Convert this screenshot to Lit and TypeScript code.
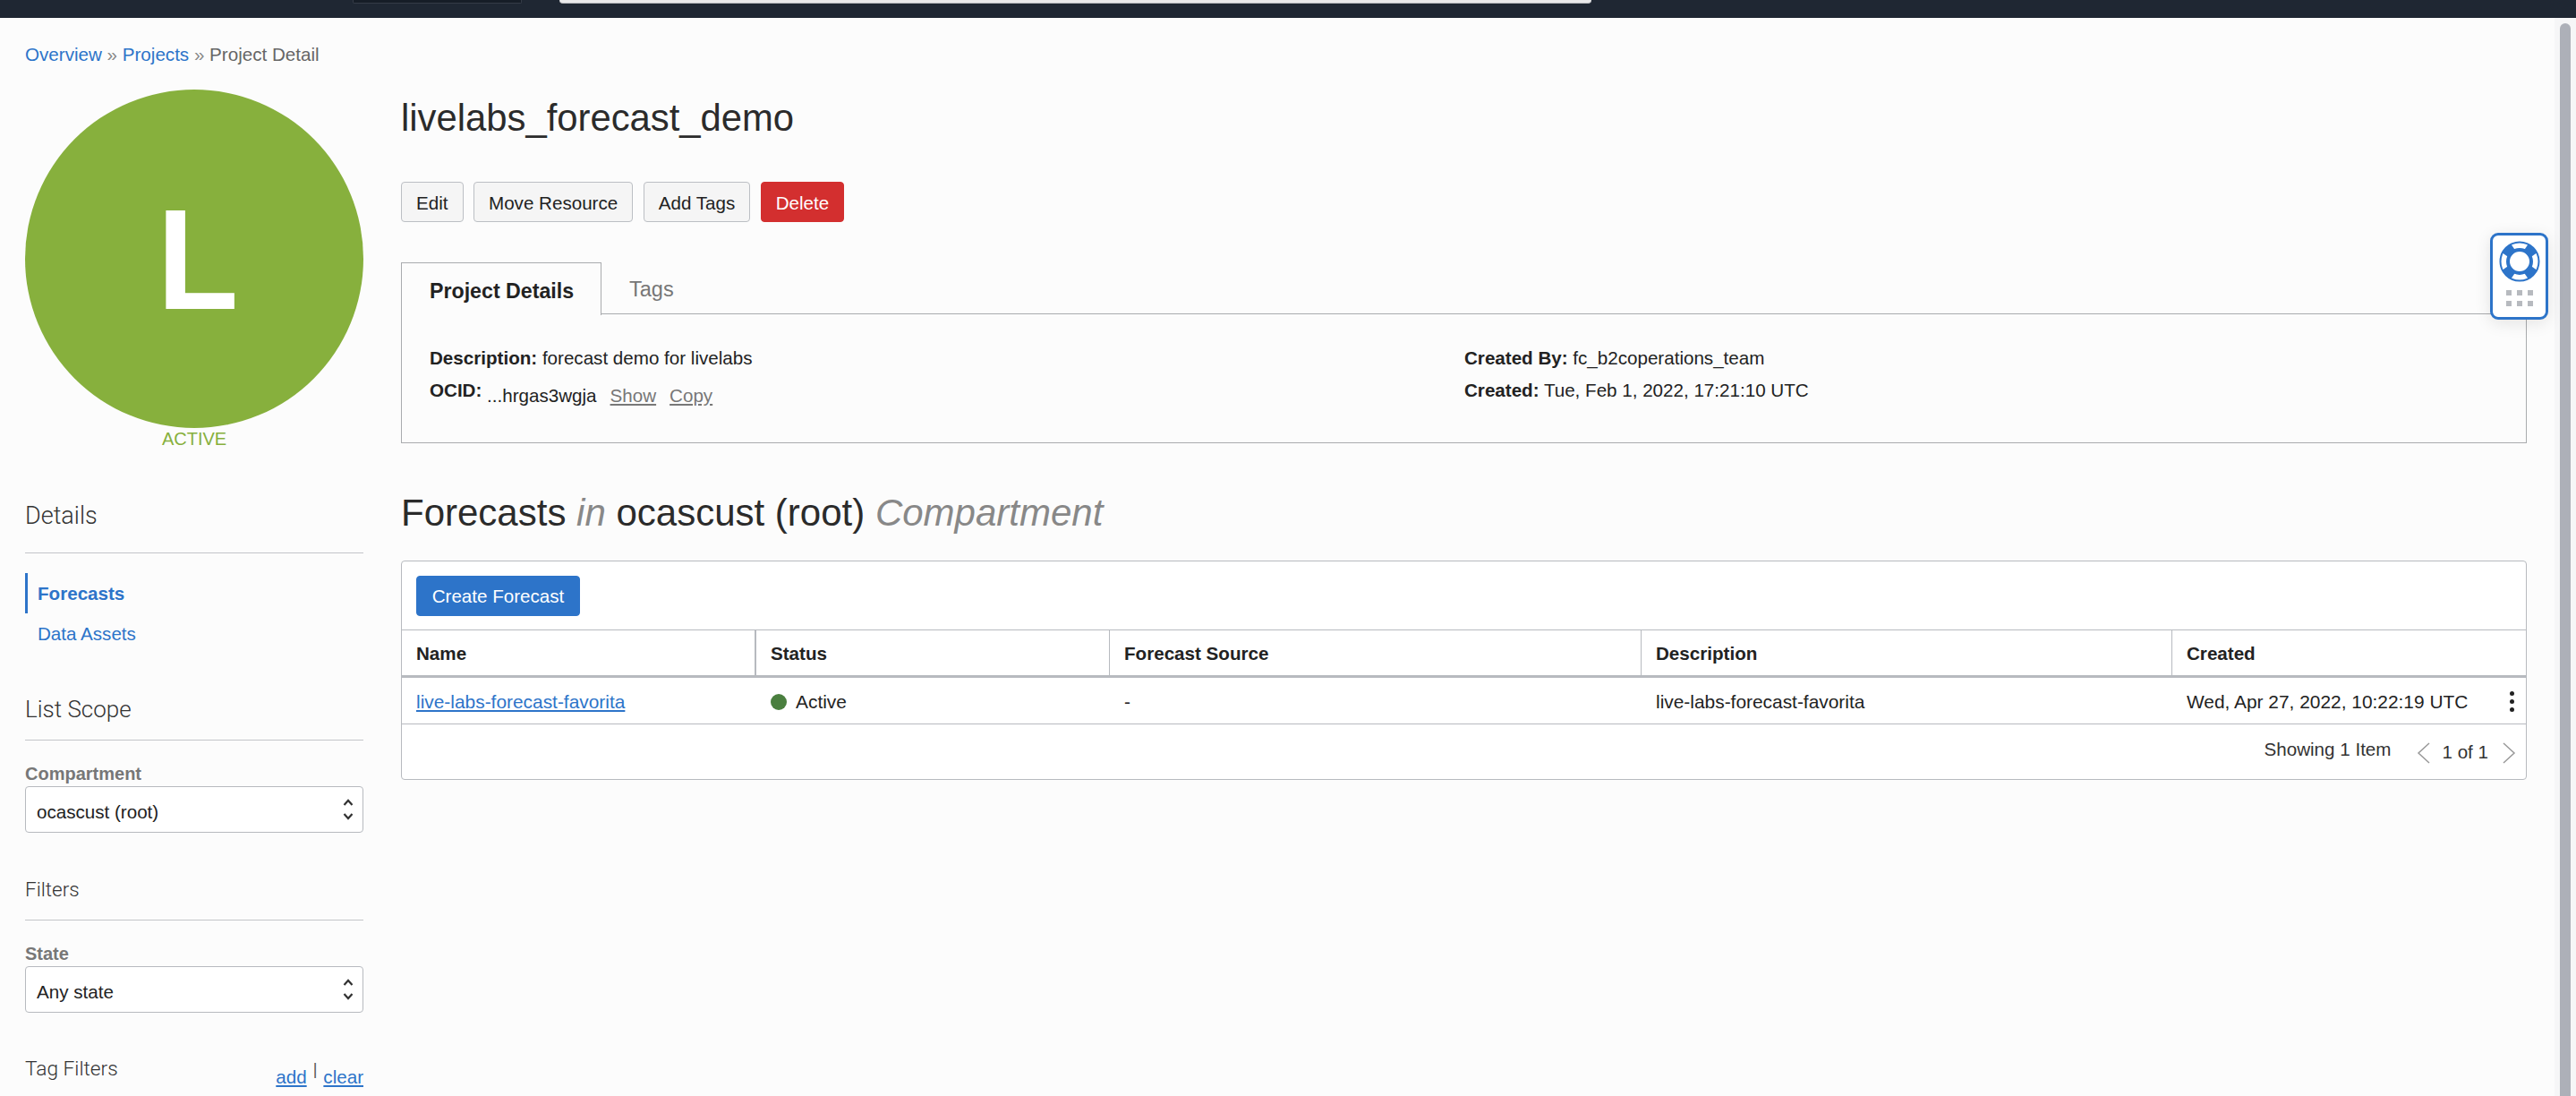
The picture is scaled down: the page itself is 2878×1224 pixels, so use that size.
import { LitElement, css, html, svg } from "lit";
import { customElement } from "lit/decorators.js";

const COLUMNS = ["Name", "Status", "Forecast Source", "Description", "Created"];

@customElement("app-root")
export class AppRoot extends LitElement {
  static styles = css`
    :host {
      display: block;
      height: 1224px;
      overflow: hidden;
      position: relative;
      background: #fcfcfc;
      color: #222;
      font-family: "Liberation Sans", Arial, sans-serif;
      font-size: 20.6px;
      line-height: 24px;
    }
    a {
      color: #2d74c9;
      text-decoration: none;
    }
    .topbar {
      height: 20px;
      background: #1f2733;
      display: flex;
      align-items: flex-start;
      padding-left: 394px;
    }
    .region {
      width: 189px;
      height: 4px;
      background: #161d27;
      border: 1px solid #353c47;
      border-top: 0;
      border-radius: 0 0 2px 2px;
      box-sizing: border-box;
    }
    .search {
      width: 1153px;
      height: 4px;
      margin-left: 42px;
      background: #e9e9ea;
      border-bottom: 1px solid #b5b7bb;
      border-radius: 0 0 6px 6px;
      box-sizing: border-box;
    }
    .page {
      display: flex;
      height: 1204px;
    }
    .main {
      flex: 1;
      padding: 29px 31px 0 28px;
      min-width: 0;
    }
    .track {
      width: 24px;
      background: #f6f6f7;
      padding: 6px 6px 0;
      box-sizing: border-box;
    }
    .thumb {
      height: 1300px;
      background: #adb0b8;
      border-radius: 6px;
    }
    .crumbs {
      color: #666;
      height: 24px;
    }
    .crumbs i {
      font-style: normal;
      color: #888;
    }
    .columns {
      display: flex;
      gap: 42px;
      margin-top: 27px;
    }
    .side {
      width: 378px;
      flex: none;
    }
    .avatar {
      width: 378px;
      height: 378px;
      box-sizing: border-box;
      padding: 2px 0 0 8px;
      border-radius: 50%;
      background: #87b03d;
      color: #fff;
      font-size: 160px;
      font-weight: 700;
      display: flex;
      align-items: center;
      justify-content: center;
    }
    .avatar span {
      display: block;
      transform: scaleX(0.93);
    }
    .state {
      text-align: center;
      color: #87b03d;
      font-size: 20px;
    }
    .side h3 {
      margin: 48px 0 0;
      font-family: Roboto, "Liberation Sans", sans-serif;
      font-size: 26px;
      font-weight: 300;
      line-height: 30px;
      color: #333;
      padding-bottom: 19px;
      border-bottom: 1px solid #c3c5c9;
    }
    .side h3.first {
      margin-top: 59px;
      padding-bottom: 26px;
      font-size: 27px;
    }
    .side h3.small {
      font-size: 22.500px;
    }
    .nav {
      margin-top: 22px;
      display: flex;
      flex-direction: column;
    }
    .nav a {
      height: 45px;
      line-height: 45px;
      padding-left: 11px;
      border-left: 3px solid transparent;
    }
    .nav a.on {
      border-left-color: #2d74c9;
      font-weight: 700;
    }
    .side h3.after-nav {
      margin-top: 47px;
    }
    .field {
      margin-top: 25px;
      color: #777;
      font-weight: 700;
      font-size: 20px;
      line-height: 24px;
    }
    .select {
      margin-top: 2px;
      height: 52px;
      box-sizing: border-box;
      border: 1px solid #b7babf;
      border-radius: 4px;
      background: #fff;
      color: #222;
      display: flex;
      align-items: center;
      justify-content: space-between;
      padding: 6px 9px 0 12px;
    }
    .select svg {
      margin-top: -6px;
    }
    .tag-head {
      margin-top: 48px;
      display: flex;
      justify-content: space-between;
      align-items: flex-start;
    }
    .tag-head span {
      font-family: Roboto, "Liberation Sans", sans-serif;
      font-size: 22.700px;
      font-weight: 300;
      line-height: 30px;
      color: #333;
    }
    .tag-head div {
      margin-top: 12px;
      display: flex;
      gap: 7px;
      color: #555;
    }
    .tag-head a {
      text-decoration: underline;
    }
    .tag-head b {
      font-weight: 400;
      margin-top: -9px;
      font-size: 18px;
    }
    .content {
      flex: 1;
      min-width: 0;
    }
    h1 {
      margin: 7px 0 0;
      font-size: 41.8px;
      line-height: 50px;
      font-weight: 400;
      color: #2b2b2b;
    }
    .actions {
      display: flex;
      gap: 11.500px;
      margin-top: 46px;
    }
    .btn {
      height: 45px;
      box-sizing: border-box;
      border: 1px solid #bcbfc4;
      border-radius: 4px;
      background: #f5f5f5;
      color: #222;
      padding: 2px 16px 0;
      display: flex;
      align-items: center;
      justify-content: center;
    }
    .btn.danger {
      background: #d32f2f;
      border-color: #d32f2f;
      color: #fff;
    }
    .btn.primary {
      background: #2d74c9;
      border-color: #2d74c9;
      color: #fff;
    }
    .tabs {
      margin-top: 45px;
      display: flex;
      height: 59px;
      box-sizing: border-box;
    }
    .tab {
      box-sizing: border-box;
      width: 224px;
      border: 1px solid #a9abae;
      border-bottom: 0;
      padding: 19px 0 0 31px;
      font-size: 23.2px;
      font-weight: 700;
      color: #222;
    }
    .tab-rest {
      flex: 1;
      border-bottom: 1px solid #a9abae;
      margin-bottom: 1px;
      padding: 18px 0 0 31px;
      font-size: 23.5px;
      color: #777;
    }
    .panel {
      height: 143px;
      box-sizing: border-box;
      border: 1px solid #a9abae;
      border-top: 0;
      display: grid;
      grid-template-columns: 1156px 1fr;
      padding: 36px 31px 0;
      align-content: start;
      row-gap: 12px;
    }
    .panel b {
      font-weight: 700;
    }
    .ocid span {
      position: relative;
      top: 6px;
    }
    .ocid a {
      position: relative;
      top: 6px;
      color: #777;
      text-decoration: underline;
      margin-left: 15px;
    }
    h2 {
      margin: 53px 0 0;
      font-size: 42px;
      line-height: 50px;
      font-weight: 400;
      color: #2b2b2b;
    }
    h2 em {
      color: #888;
    }
    .card {
      margin-top: 28px;
      height: 245px;
      box-sizing: border-box;
      border: 1px solid #b7babf;
      border-radius: 4px;
      background: #fff;
    }
    .toolbar {
      height: 76px;
      box-sizing: border-box;
      padding: 16px;
    }
    .toolbar .btn {
      width: 183px;
      padding: 1px 0 0;
    }
    .grid {
      display: grid;
      grid-template-columns: 396px 395px 594px 593px 1fr;
    }
    .th {
      height: 54px;
      box-sizing: border-box;
      border-top: 1px solid #b7babf;
      border-bottom: 3px solid #b7babf;
      border-right: 1px solid #b7babf;
      padding: 2px 16px 0;
      display: flex;
      align-items: center;
      font-weight: 700;
    }
    .th:nth-child(1) {
      border-right-width: 2px;
    }
    .th:nth-child(5) {
      border-right: 0;
    }
    .td {
      height: 52px;
      box-sizing: border-box;
      border-bottom: 1px solid #b7babf;
      padding: 2px 16px 0;
      display: flex;
      align-items: center;
      gap: 10px;
      white-space: nowrap;
      font-size: 20.9px;
    }
    .td.name a {
      text-decoration: underline;
    }
    .dot {
      width: 18px;
      height: 18px;
      border-radius: 50%;
      background: #4a7f3f;
    }
    .td.last {
      padding-right: 13px;
      justify-content: space-between;
    }
    .kebab {
      display: flex;
      flex-direction: column;
      gap: 4px;
    }
    .kebab i {
      width: 5px;
      height: 5px;
      border-radius: 50%;
      background: #222;
    }
    .pager {
      display: flex;
      justify-content: flex-end;
      align-items: center;
      height: 60px;
      padding-right: 11px;
      color: #333;
    }
    .pager .count {
      margin: 0 29px 4px 0;
    }
    .pager .pages {
      margin: 2px 15px 0 12px;
    }
    .pager svg {
      margin-top: 4px;
    }
    .help {
      position: absolute;
      left: 2782px;
      top: 260px;
      width: 65px;
      height: 97px;
      box-sizing: border-box;
      border: 3px solid #2d74c9;
      border-radius: 9px;
      background: #fff;
      box-shadow: 0 4px 18px rgba(0, 0, 0, 0.1);
      padding: 6px 0 0 7px;
    }
    .grip {
      display: grid;
      grid-template-columns: repeat(3, 6px);
      gap: 6px;
      margin: 9px 0 0 8px;
    }
    .grip i {
      height: 6px;
      background: #b7babf;
    }
    .help svg {
      display: block;
    }
  `;

  private chevrons() {
    return html`<svg width="14" height="26" viewBox="0 0 14 26" fill="none" stroke="#333" stroke-width="2.200">
      <path d="M2.5 8 7 3l4.500 5M2.500 18 7 23l4.500-5" />
    </svg>`;
  }

  private buoy() {
    const spokes = [45, 135, 225, 315].map(
      (a) => svg`<path d="M-7 -21 L7 -21 L5 -10 L-5 -10 Z" transform="rotate(${a})" fill="#2d74c9" />`
    );
    return html`<svg width="46" height="46" viewBox="-23 -23 46 46">
      <circle r="21.500" fill="#fff" stroke="#2d74c9" stroke-width="2" />
      ${spokes}
      <circle r="13" fill="#fff" stroke="#2d74c9" stroke-width="4" />
    </svg>`;
  }

  private sideNav() {
    return html`
      <div class="side">
        <div class="avatar"><span>L</span></div>
        <div class="state">ACTIVE</div>
        <h3 class="first">Details</h3>
        <nav class="nav">
          <a class="on" href="#">Forecasts</a>
          <a href="#">Data Assets</a>
        </nav>
        <h3 class="after-nav">List Scope</h3>
        <div class="field">Compartment</div>
        <div class="select">ocascust (root) ${this.chevrons()}</div>
        <h3 class="small">Filters</h3>
        <div class="field">State</div>
        <div class="select">Any state ${this.chevrons()}</div>
        <div class="tag-head">
          <span>Tag Filters</span>
          <div><a href="#">add</a><b>|</b><a href="#">clear</a></div>
        </div>
      </div>
    `;
  }

  render() {
    return html`
      <div class="topbar">
        <div class="region"></div>
        <div class="search"></div>
      </div>
      <div class="page">
        <div class="main">
          <div class="crumbs">
            <a href="#">Overview</a> <i>»</i> <a href="#">Projects</a> <i>»</i> Project Detail
          </div>
          <div class="columns">
            ${this.sideNav()}
            <div class="content">
              <h1>livelabs_forecast_demo</h1>
              <div class="actions">
                <div class="btn">Edit</div>
                <div class="btn">Move Resource</div>
                <div class="btn">Add Tags</div>
                <div class="btn danger">Delete</div>
              </div>
              <div class="tabs">
                <div class="tab">Project Details</div>
                <div class="tab-rest">Tags</div>
              </div>
              <div class="panel">
                <div><b>Description:</b> forecast demo for livelabs</div>
                <div><b>Created By:</b> fc_b2coperations_team</div>
                <div class="ocid">
                  <b>OCID:</b> <span>...hrgas3wgja</span><a href="#">Show</a><a href="#">Copy</a>
                </div>
                <div><b>Created:</b> Tue, Feb 1, 2022, 17:21:10 UTC</div>
              </div>
              <h2>Forecasts <em>in</em> ocascust (root) <em>Compartment</em></h2>
              <div class="card">
                <div class="toolbar"><div class="btn primary">Create Forecast</div></div>
                <div class="grid">
                  ${COLUMNS.map((c) => html`<div class="th">${c}</div>`)}
                  <div class="td name"><a href="#">live-labs-forecast-favorita</a></div>
                  <div class="td"><span class="dot"></span>Active</div>
                  <div class="td">-</div>
                  <div class="td">live-labs-forecast-favorita</div>
                  <div class="td last">
                    Wed, Apr 27, 2022, 10:22:19 UTC
                    <span class="kebab"><i></i><i></i><i></i></span>
                  </div>
                </div>
                <div class="pager">
                  <span class="count">Showing 1 Item</span>
                  <svg width="16" height="24" viewBox="0 0 16 24" fill="none" stroke="#999" stroke-width="1.500">
                    <path d="M14 1 2 12l12 11" />
                  </svg>
                  <span class="pages">1 of 1</span>
                  <svg width="16" height="24" viewBox="0 0 16 24" fill="none" stroke="#999" stroke-width="1.500">
                    <path d="m2 1 12 11L2 23" />
                  </svg>
                </div>
              </div>
            </div>
          </div>
        </div>
        <div class="track"><div class="thumb"></div></div>
      </div>
      <div class="help">
        ${this.buoy()}
        <div class="grip">${[0, 1, 2, 3, 4, 5].map(() => html`<i></i>`)}</div>
      </div>
    `;
  }
}

declare global {
  interface HTMLElementTagNameMap {
    "app-root": AppRoot;
  }
}
